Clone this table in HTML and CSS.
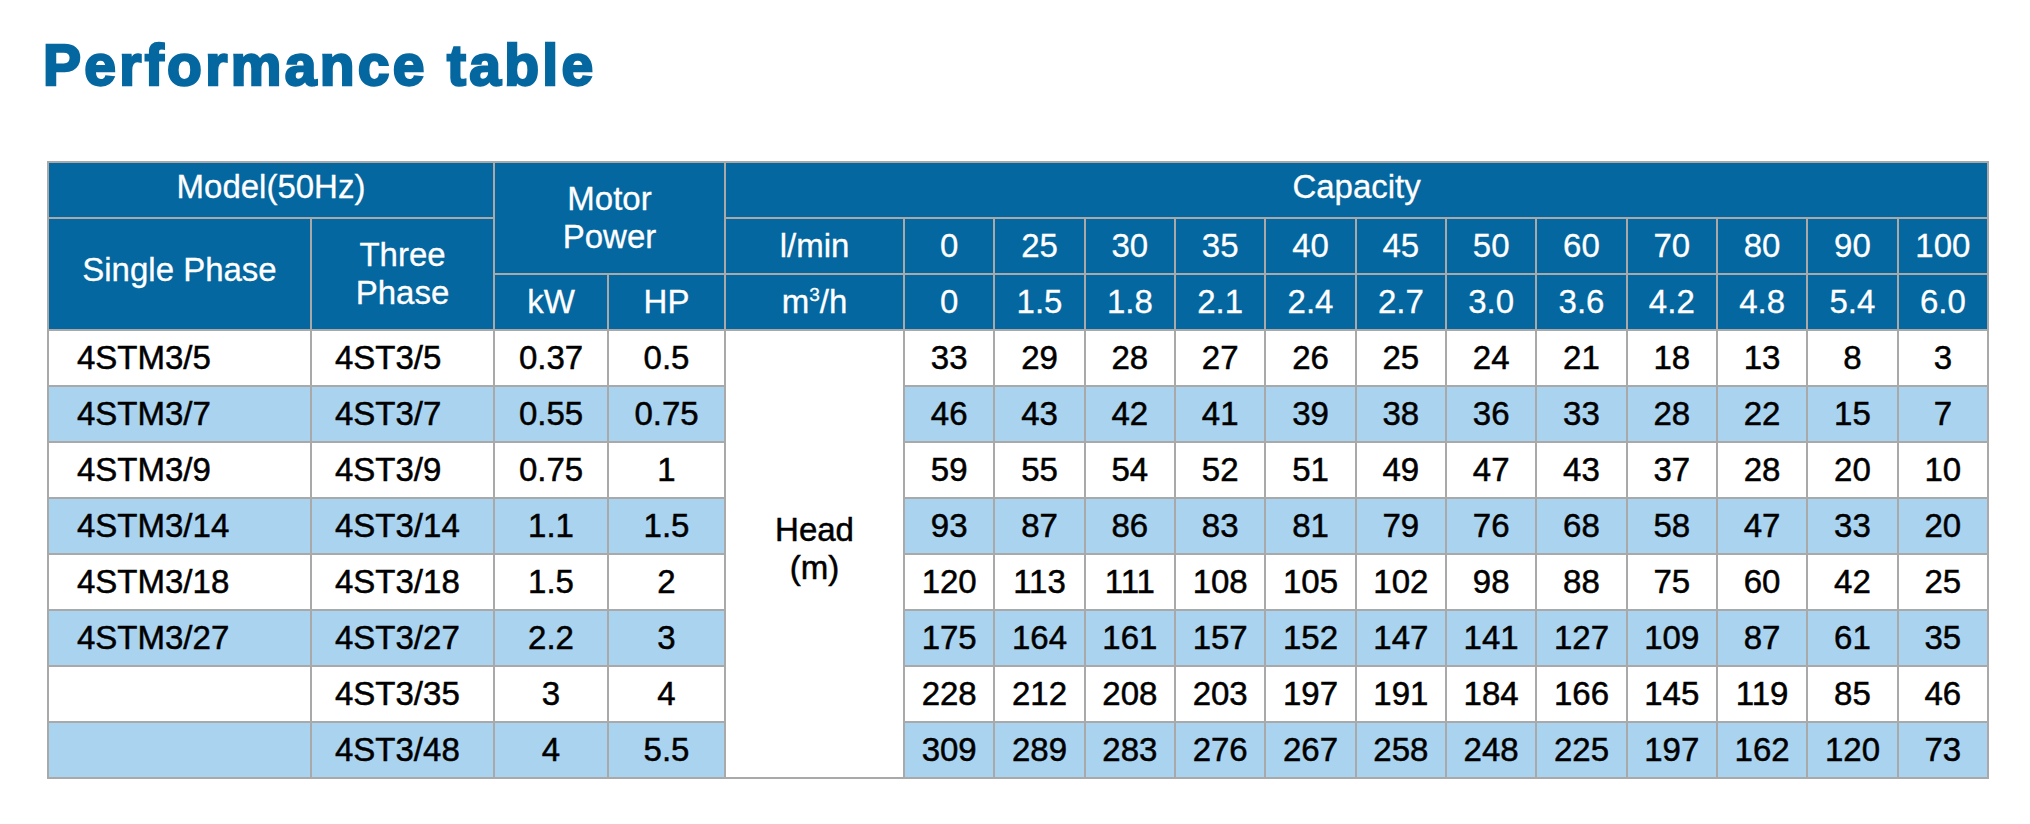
FILE: index.html
```html
<!DOCTYPE html>
<html lang="en">
<head>
<meta charset="utf-8">
<title>Performance table</title>
<link rel="stylesheet" href="styles.css">
</head>
<body>
<div class="page">
  <h1 class="title">Performance table</h1>
  <table class="perf">
    <colgroup>
      <col class="c-single">
      <col class="c-three">
      <col class="c-kw">
      <col class="c-hp">
      <col class="c-unit">
      <col class="c-val"><col class="c-val"><col class="c-val"><col class="c-val">
      <col class="c-val"><col class="c-val"><col class="c-val"><col class="c-val">
      <col class="c-val"><col class="c-val"><col class="c-val"><col class="c-val">
    </colgroup>
    <thead>
      <tr class="hr1">
        <th colspan="2">Model(50Hz)</th>
        <th colspan="2" rowspan="2" class="two-line">Motor<br>Power</th>
        <th colspan="13">Capacity</th>
      </tr>
      <tr class="hr2">
        <th rowspan="2" class="single">Single Phase</th>
        <th rowspan="2" class="two-line">Three<br>Phase</th>
        <th>l/min</th>
        <th>0</th><th>25</th><th>30</th><th>35</th><th>40</th><th>45</th>
        <th>50</th><th>60</th><th>70</th><th>80</th><th>90</th><th>100</th>
      </tr>
      <tr class="hr3">
        <th>kW</th>
        <th>HP</th>
        <th>m<span class="sup">3</span>/h</th>
        <th>0</th><th>1.5</th><th>1.8</th><th>2.1</th><th>2.4</th><th>2.7</th>
        <th>3.0</th><th>3.6</th><th>4.2</th><th>4.8</th><th>5.4</th><th>6.0</th>
      </tr>
    </thead>
    <tbody>
      <tr>
        <td class="m1">4STM3/5</td><td class="m3">4ST3/5</td><td>0.37</td><td>0.5</td>
        <td rowspan="8" class="head">Head<br>(m)</td>
        <td>33</td><td>29</td><td>28</td><td>27</td><td>26</td><td>25</td><td>24</td><td>21</td><td>18</td><td>13</td><td>8</td><td>3</td>
      </tr>
      <tr class="alt">
        <td class="m1">4STM3/7</td><td class="m3">4ST3/7</td><td>0.55</td><td>0.75</td>
        <td>46</td><td>43</td><td>42</td><td>41</td><td>39</td><td>38</td><td>36</td><td>33</td><td>28</td><td>22</td><td>15</td><td>7</td>
      </tr>
      <tr>
        <td class="m1">4STM3/9</td><td class="m3">4ST3/9</td><td>0.75</td><td>1</td>
        <td>59</td><td>55</td><td>54</td><td>52</td><td>51</td><td>49</td><td>47</td><td>43</td><td>37</td><td>28</td><td>20</td><td>10</td>
      </tr>
      <tr class="alt">
        <td class="m1">4STM3/14</td><td class="m3">4ST3/14</td><td>1.1</td><td>1.5</td>
        <td>93</td><td>87</td><td>86</td><td>83</td><td>81</td><td>79</td><td>76</td><td>68</td><td>58</td><td>47</td><td>33</td><td>20</td>
      </tr>
      <tr>
        <td class="m1">4STM3/18</td><td class="m3">4ST3/18</td><td>1.5</td><td>2</td>
        <td>120</td><td>113</td><td>111</td><td>108</td><td>105</td><td>102</td><td>98</td><td>88</td><td>75</td><td>60</td><td>42</td><td>25</td>
      </tr>
      <tr class="alt">
        <td class="m1">4STM3/27</td><td class="m3">4ST3/27</td><td>2.2</td><td>3</td>
        <td>175</td><td>164</td><td>161</td><td>157</td><td>152</td><td>147</td><td>141</td><td>127</td><td>109</td><td>87</td><td>61</td><td>35</td>
      </tr>
      <tr>
        <td class="m1"></td><td class="m3">4ST3/35</td><td>3</td><td>4</td>
        <td>228</td><td>212</td><td>208</td><td>203</td><td>197</td><td>191</td><td>184</td><td>166</td><td>145</td><td>119</td><td>85</td><td>46</td>
      </tr>
      <tr class="alt">
        <td class="m1"></td><td class="m3">4ST3/48</td><td>4</td><td>5.5</td>
        <td>309</td><td>289</td><td>283</td><td>276</td><td>267</td><td>258</td><td>248</td><td>225</td><td>197</td><td>162</td><td>120</td><td>73</td>
      </tr>
    </tbody>
  </table>
</div>
</body>
</html>
```

FILE: styles.css
```css
html, body {
  margin: 0;
  padding: 0;
  background: #ffffff;
}

.page {
  padding: 37px 0 0 43px;
  font-family: "Liberation Sans", Arial, sans-serif;
}

.title {
  margin: 0;
  height: 56px;
  font-size: 57px;
  line-height: 56px;
  font-weight: 700;
  color: #0467a0;
  -webkit-text-stroke: 2.4px #0467a0;
  letter-spacing: 3.3px;
}

.perf {
  margin: 68px 0 0 4px;
  width: 1940px;
  table-layout: fixed;
  border-collapse: collapse;
  font-size: 33px;
  color: #000000;
}

.c-single { width: 263px; }
.c-three { width: 183px; }
.c-kw { width: 114px; }
.c-hp { width: 117px; }
.c-unit { width: 179px; }
.c-val { width: 90.33px; }

.perf th,
.perf td {
  border: 2px solid #a9a9a9;
  padding: 0;
  text-align: center;
  vertical-align: middle;
  white-space: nowrap;
}

.perf tr {
  height: 56px;
}

.perf th {
  background: #0467a0;
  color: #ffffff;
  font-weight: 400;
  line-height: 38px;
  -webkit-text-stroke: 0.3px #ffffff;
}

.hr1 th {
  padding-bottom: 6px;
}

.hr1 th.two-line {
  padding-bottom: 0;
}

.perf th.single {
  padding-bottom: 8px;
}

.sup {
  font-size: 19px;
  vertical-align: 12px;
  line-height: 0;
}

.perf td {
  background: #ffffff;
  line-height: 38px;
  -webkit-text-stroke: 0.5px #000000;
}

.perf tr.alt td {
  background: #a9d3ef;
}

.perf td.m1 {
  text-align: left;
  padding-left: 28px;
}

.perf td.m3 {
  text-align: left;
  padding-left: 23px;
}

.perf td.head {
  background: #ffffff;
  padding-bottom: 10px;
}
```
